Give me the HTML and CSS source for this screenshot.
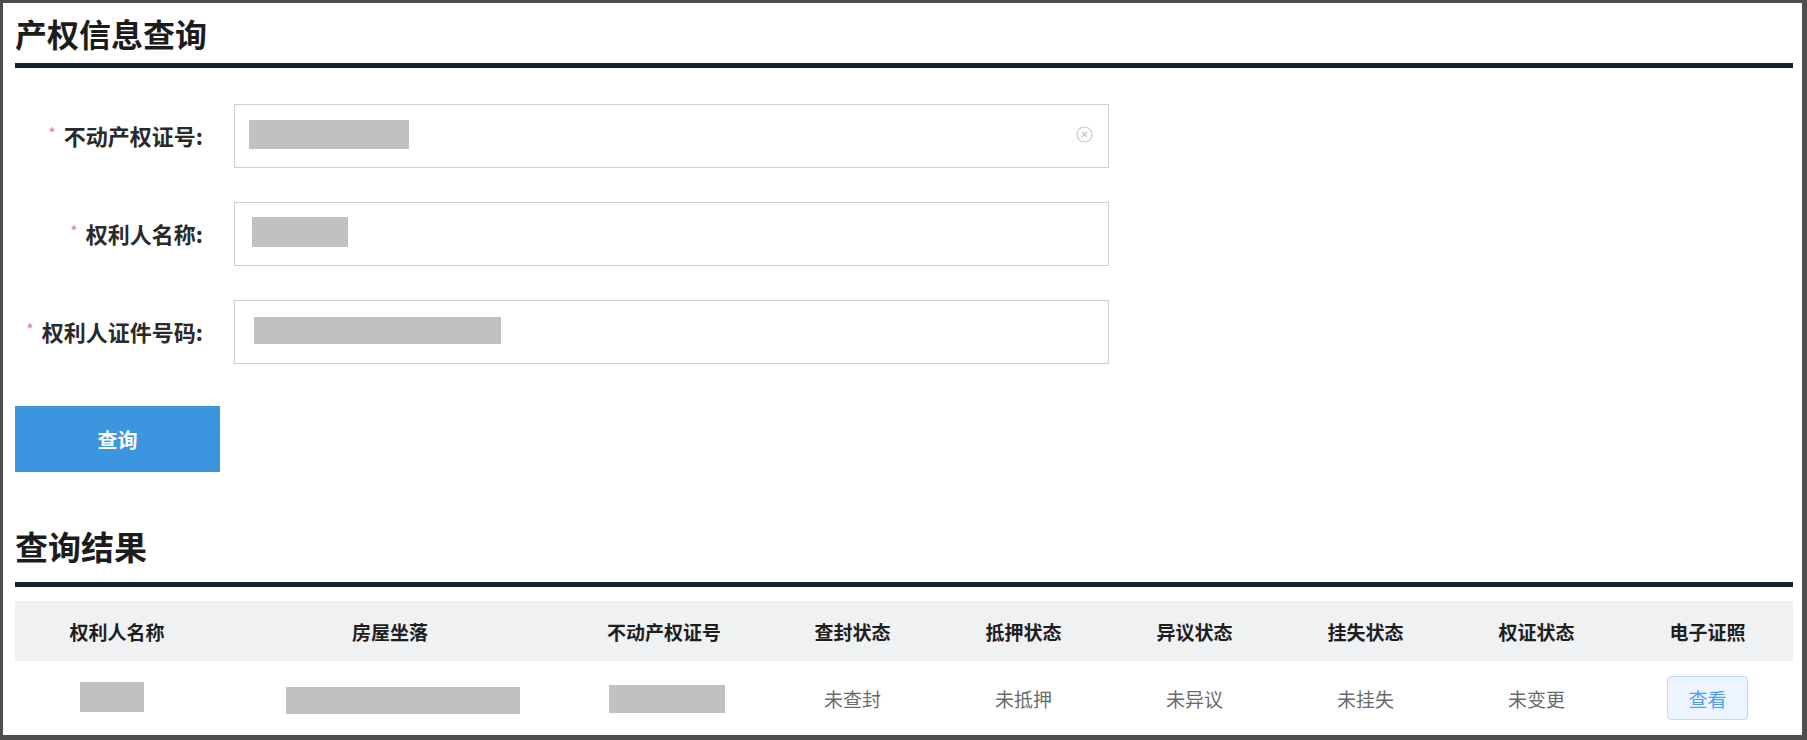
FILE: index.html
```html
<!DOCTYPE html>
<html lang="zh-CN">
<head>
  <meta charset="UTF-8">
  <meta name="viewport" content="width=device-width, initial-scale=1.0">
  <title>产权信息查询</title>
  <link rel="stylesheet" href="styles.css">
</head>
<body>
  <div class="panel">
    <h1 class="section-title">产权信息查询</h1>
    <form class="query-form" onsubmit="return false">
      <div class="field">
        <label><span class="req">*</span>不动产权证号:</label>
        <div class="input">
          <span class="mask" style="width:160px;height:29px"></span>
          <svg class="clear" width="17" height="17" viewBox="0 0 17 17"><circle cx="8.5" cy="8.5" r="7.5" fill="none" stroke="#c8cad0" stroke-width="1.2"/><path d="M6 6l5 5M11 6l-5 5" stroke="#c0c2c8" stroke-width="1.2"/></svg>
        </div>
      </div>
      <div class="field">
        <label><span class="req">*</span>权利人名称:</label>
        <div class="input">
          <span class="mask" style="width:96px;height:30px;margin-left:3px"></span>
        </div>
      </div>
      <div class="field">
        <label><span class="req">*</span>权利人证件号码:</label>
        <div class="input">
          <span class="mask" style="width:247px;height:27px;margin-left:5px"></span>
        </div>
      </div>
      <button class="btn-query">查询</button>
    </form>

    <h2 class="section-title result-title">查询结果</h2>
    <div class="result-table">
      <div class="row head">
        <div>权利人名称</div>
        <div>房屋坐落</div>
        <div>不动产权证号</div>
        <div>查封状态</div>
        <div>抵押状态</div>
        <div>异议状态</div>
        <div>挂失状态</div>
        <div>权证状态</div>
        <div>电子证照</div>
      </div>
      <div class="row body">
        <div><span class="mask" style="width:64px;height:30px;margin:-8px 0 0 -10px"></span></div>
        <div><span class="mask" style="width:234px;height:27px;margin:4px 0 0 26px"></span></div>
        <div><span class="mask" style="width:116px;height:28px;margin:-2px 0 0 6px"></span></div>
        <div>未查封</div>
        <div>未抵押</div>
        <div>未异议</div>
        <div>未挂失</div>
        <div>未变更</div>
        <div><button class="btn-view">查看</button></div>
      </div>
    </div>
  </div>
</body>
</html>
```

FILE: styles.css
```css
html, body { margin: 0; height: 100%; }
body {
  background: #4e4e4e;
  padding: 3px 5px 0 3px;
  box-sizing: border-box;
  overflow: hidden;
  font-family: "Noto Sans CJK SC", "Noto Sans", sans-serif;
  color: #222;
}
.panel { background: #fff; height: 732px; padding: 0 9px 0 12px; box-sizing: border-box; }

.section-title {
  margin: 0;
  padding: 8px 0 8px;
  font-size: 32px;
  line-height: 44px;
  font-weight: 700;
  color: #1c1c1c;
  border-bottom: 5px solid #17212c;
}
.result-title { margin-top: 52px; padding-bottom: 14px; padding-top: 0; font-size: 33px; }

.query-form { padding-top: 36px; }
.field { display: flex; align-items: center; height: 64px; margin-bottom: 34px; }
.field label {
  width: 188px;
  padding-right: 31px;
  padding-bottom: 3px;
  text-align: right;
  font-size: 22px;
  font-weight: 700;
  color: #2a2a2a;
  white-space: nowrap;
}
.field label .req { color: #f27b7b; font-size: 16px; font-weight: 400; margin-right: 8px; position: relative; top: -5px; }
.input {
  width: 875px;
  height: 64px;
  border: 1px solid #cfcfcf;
  box-sizing: border-box;
  display: flex;
  align-items: center;
  padding-left: 14px;
  padding-bottom: 4px;
}
.mask { display: inline-block; background: #c1c1c1; vertical-align: middle; }
.clear { margin-left: auto; margin-right: 15px; }

.btn-query {
  margin-top: 8px;
  width: 205px;
  height: 66px;
  border: none;
  background: #3b96df;
  color: #fff;
  font-family: inherit;
  font-size: 20px;
  font-weight: 700;
  cursor: pointer;
}

.result-table { margin-top: 14px; }
.row { display: grid; grid-template-columns: 204px 342px 206px repeat(6, 1fr); align-items: center; text-align: center; }
.row.head { height: 60px; background: #f0f1f3; font-size: 19px; font-weight: 700; color: #1e1e1e; }
.row.body { height: 74px; font-size: 19px; color: #6a6a6a; }
.btn-view {
  width: 81px;
  height: 44px;
  border: 1px solid #b9dafa;
  border-radius: 4px;
  background: #ecf5ff;
  color: #4a9ff0;
  font-family: inherit;
  font-size: 19px;
  cursor: pointer;
}
```
